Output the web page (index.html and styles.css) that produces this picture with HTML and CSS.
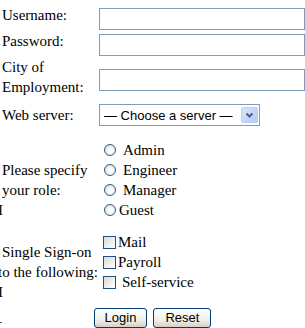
FILE: index.html
```html
<!doctype html>
<html lang="en">
<head>
	<meta charset="UTF-8">
	<title>Login</title>
	<link rel="stylesheet" href="styles.css">
</head>
<body>
	<form class="login">
		<div class="row row-user">
			<label class="cap" for="user">Username:</label>
			<input class="text" id="user" type="text">
		</div>
		<div class="row row-pass">
			<label class="cap" for="pass">Password:</label>
			<input class="text" id="pass" type="password">
		</div>
		<div class="row row-city">
			<label class="cap" for="city">City of<br>Employment:</label>
			<input class="text" id="city" type="text">
		</div>
		<div class="row row-server">
			<label class="cap" for="server">Web server:</label>
			<div class="pick">
				<select id="server">
					<option>&mdash; Choose a server &mdash;</option>
				</select>
				<svg class="arrow" width="17" height="16" viewBox="0 0 17 16">
					<defs>
						<linearGradient id="ag" x1="0" y1="0" x2="1" y2="1">
							<stop offset="0" stop-color="#dbe6fd"/>
							<stop offset="1" stop-color="#b3c8f5"/>
						</linearGradient>
					</defs>
					<rect x="0.5" y="0.5" width="16" height="15" rx="1.5" fill="url(#ag)" stroke="#b8ccf4"/>
					<path d="M5.5 6.5 L8.5 9.5 L11.5 6.5" fill="none" stroke="#4d6185" stroke-width="2"/>
				</svg>
			</div>
		</div>
		<div class="row row-role">
			<div class="cap">Please specify<br>your role:<br><span class="clip">I</span></div>
			<div class="opts">
				<label class="opt"><input type="radio" name="role"><span class="pad">Admin</span></label>
				<label class="opt"><input type="radio" name="role"><span class="pad">Engineer</span></label>
				<label class="opt"><input type="radio" name="role"><span class="pad">Manager</span></label>
				<label class="opt"><input type="radio" name="role"><span>Guest</span></label>
			</div>
		</div>
		<div class="row row-sso">
			<div class="cap">Single Sign-on<br><span class="cut">to the following:</span><br><span class="clip">I</span><br><span class="tick">_</span></div>
			<div class="opts">
				<label class="opt"><input type="checkbox"><span>Mail</span></label>
				<label class="opt"><input type="checkbox"><span>Payroll</span></label>
				<label class="opt"><input type="checkbox"><span class="pad">Self-service</span></label>
			</div>
		</div>
		<div class="row row-btns">
			<button type="submit" class="btn">Login</button>
			<button type="reset" class="btn">Reset</button>
		</div>
	</form>
</body>
</html>
```

FILE: styles.css
```css
html,body{
	margin: 0;
	padding: 0;
	background: #fff;
	overflow: hidden;
}
body{
	font: 15px/20px "Liberation Serif", "Times New Roman", serif;
	color: #000;
}
.row{
	display: flex;
	align-items: flex-start;
}
.cap{
	flex: none;
	width: 99px;
	box-sizing: border-box;
	padding-left: 2px;
	white-space: nowrap;
}
.text{
	box-sizing: border-box;
	width: 206px;
	height: 22px;
	margin: 3px 0 0;
	padding: 1px 3px;
	border: 1px solid #7f9db9;
	background: #fff;
	font: 13px "Liberation Sans", Arial, sans-serif;
	outline: none;
}
.row-user{ margin-top: 5px; }
.row-pass{ margin-top: 1px; }
.row-city{ margin-top: 1px; }
.row-city .text{ margin-top: 12px; }
.row-server{ margin-top: 7px; }
.row-server .cap{ padding-top: 1px; }

.pick{
	position: relative;
	width: 161px;
	height: 22px;
}
.pick select{
	-webkit-appearance: none;
	appearance: none;
	box-sizing: border-box;
	width: 100%;
	height: 100%;
	margin: 0;
	padding: 0 0 0 4px;
	border: 1px solid #7f9db9;
	border-radius: 0;
	background: #fff;
	color: #000;
	font: 13px "Liberation Sans", Arial, sans-serif;
	outline: none;
}
.arrow{
	position: absolute;
	right: 2px;
	top: 3px;
	pointer-events: none;
}

.row-role{ margin-top: 14px; }
.row-role .cap{ margin-top: 20px; }
.row-sso{ margin-top: 12px; }
.row-sso .cap{
	margin-top: 10px;
	height: 60px;
}
.opts{
	display: flex;
	flex-direction: column;
}
.opt{
	display: flex;
	align-items: center;
	height: 20px;
	white-space: nowrap;
}
.opt input{
	-webkit-appearance: none;
	appearance: none;
	flex: none;
	margin: 0 3px 0 5px;
	padding: 0;
	width: 12px;
	height: 12px;
	border: 1px solid #2b5a85;
	border-radius: 50%;
	background: radial-gradient(circle at 60% 60%, #fff 20%, #d9d9d2 100%);
}
.opt input[type=checkbox]{
	margin: 0 2px 0 4px;
	width: 13px;
	height: 13px;
	border-color: #1c5180;
	border-radius: 0;
	background: linear-gradient(135deg, #dcdcd6 0%, #f4f4f1 70%, #fff 100%);
}
.pad{ margin-left: 4px; }
.clip{ margin-left: -4px; }
.cut{ margin-left: -4px; }
.tick{
	margin-left: -8px;
	vertical-align: -4px;
}

.row-btns{
	margin-top: 6px;
	justify-content: center;
	gap: 6px;
}
.btn{
	height: 20px;
	margin: 0;
	padding: 0 10px;
	border: 1px solid #003c74;
	border-radius: 3px;
	background: linear-gradient(#ffffff, #f0f0ea 60%, #d6d0c5);
	color: #000;
	font: 13px/16px "Liberation Sans", Arial, sans-serif;
}
.btn + .btn{ padding: 0 11px; }
```
